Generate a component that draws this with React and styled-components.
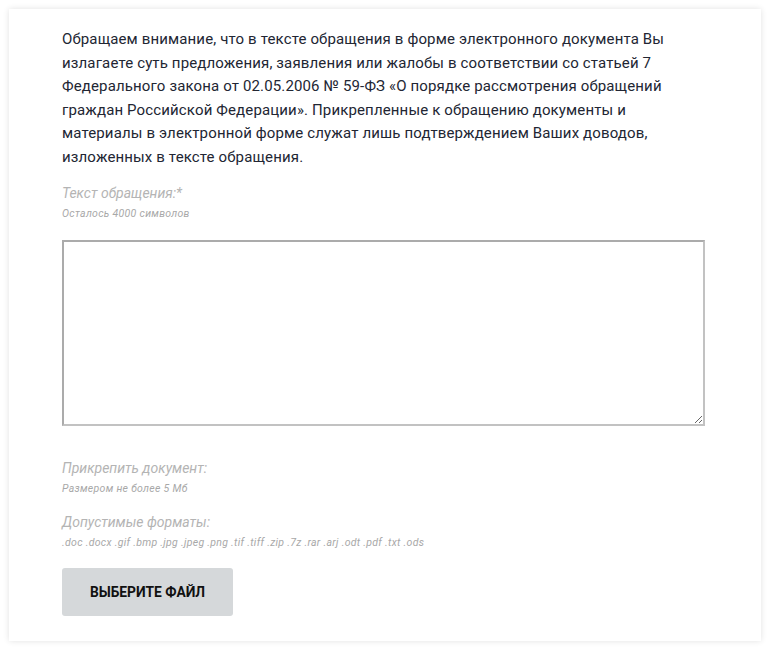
import React from 'react';
import styled, { createGlobalStyle } from 'styled-components';

const GlobalStyle = createGlobalStyle`
  html, body {
    margin: 0;
    padding: 0;
    background: #ffffff;
  }
  body {
    font-family: Roboto, "Noto Sans", Arial, sans-serif;
  }
`;

const Page = styled.div`
  padding: 9px 9px 10px 9px;
`;

const Card = styled.div`
  background: #fff;
  box-shadow: 0 0 6px rgba(0, 0, 0, 0.12);
  padding: 19px 56px 25px 53px;
  width: 752px;
  box-sizing: border-box;
`;

const Notice = styled.p`
  margin: 0;
  font-size: 15px;
  line-height: 23.5px;
  letter-spacing: 0.14px;
  color: #222633;
`;

const Label = styled.div`
  margin-top: ${(p) => p.gap}px;
  font-size: 14px;
  line-height: 18px;
  font-style: italic;
  color: #b4b4b4;
`;

const Hint = styled.div`
  margin-top: 5px;
  font-size: 10.5px;
  line-height: 14px;
  letter-spacing: 0.3px;
  font-style: italic;
  color: #a8a8a8;
`;

const TextArea = styled.textarea`
  display: block;
  margin-top: 19px;
  width: 643px;
  height: 186px;
  box-sizing: border-box;
  border: 2px solid #c2c2c2;
  border-top-color: #ababab;
  border-left-color: #ababab;
  resize: vertical;
  font-family: inherit;
  outline: none;
`;

const FileButton = styled.button`
  margin-top: 18px;
  width: 171px;
  height: 48px;
  border: none;
  border-radius: 3px;
  background: #d5d8da;
  color: #111;
  font-family: Roboto, Arial, sans-serif;
  font-weight: 700;
  font-size: 13.8px;
  text-transform: uppercase;
  cursor: pointer;
`;

const App = () => {
  return (
    <Page>
      <GlobalStyle />
      <Card>
        <Notice>
          Обращаем внимание, что в тексте обращения в форме электронного документа Вы<br />
          излагаете суть предложения, заявления или жалобы в соответствии со статьей 7<br />
          Федерального закона от 02.05.2006 № 59-ФЗ «О порядке рассмотрения обращений<br />
          граждан Российской Федерации». Прикрепленные к обращению документы и<br />
          материалы в электронной форме служат лишь подтверждением Ваших доводов,<br />
          изложенных в тексте обращения.
        </Notice>
        <Label gap={15}>Текст обращения:*</Label>
        <Hint>Осталось 4000 символов</Hint>
        <TextArea />
        <Label gap={33}>Прикрепить документ:</Label>
        <Hint>Размером не более 5 Мб</Hint>
        <Label gap={17}>Допустимые форматы:</Label>
        <Hint>.doc .docx .gif .bmp .jpg .jpeg .png .tif .tiff .zip .7z .rar .arj .odt .pdf .txt .ods</Hint>
        <FileButton>Выберите файл</FileButton>
      </Card>
    </Page>
  );
};

export default App;
